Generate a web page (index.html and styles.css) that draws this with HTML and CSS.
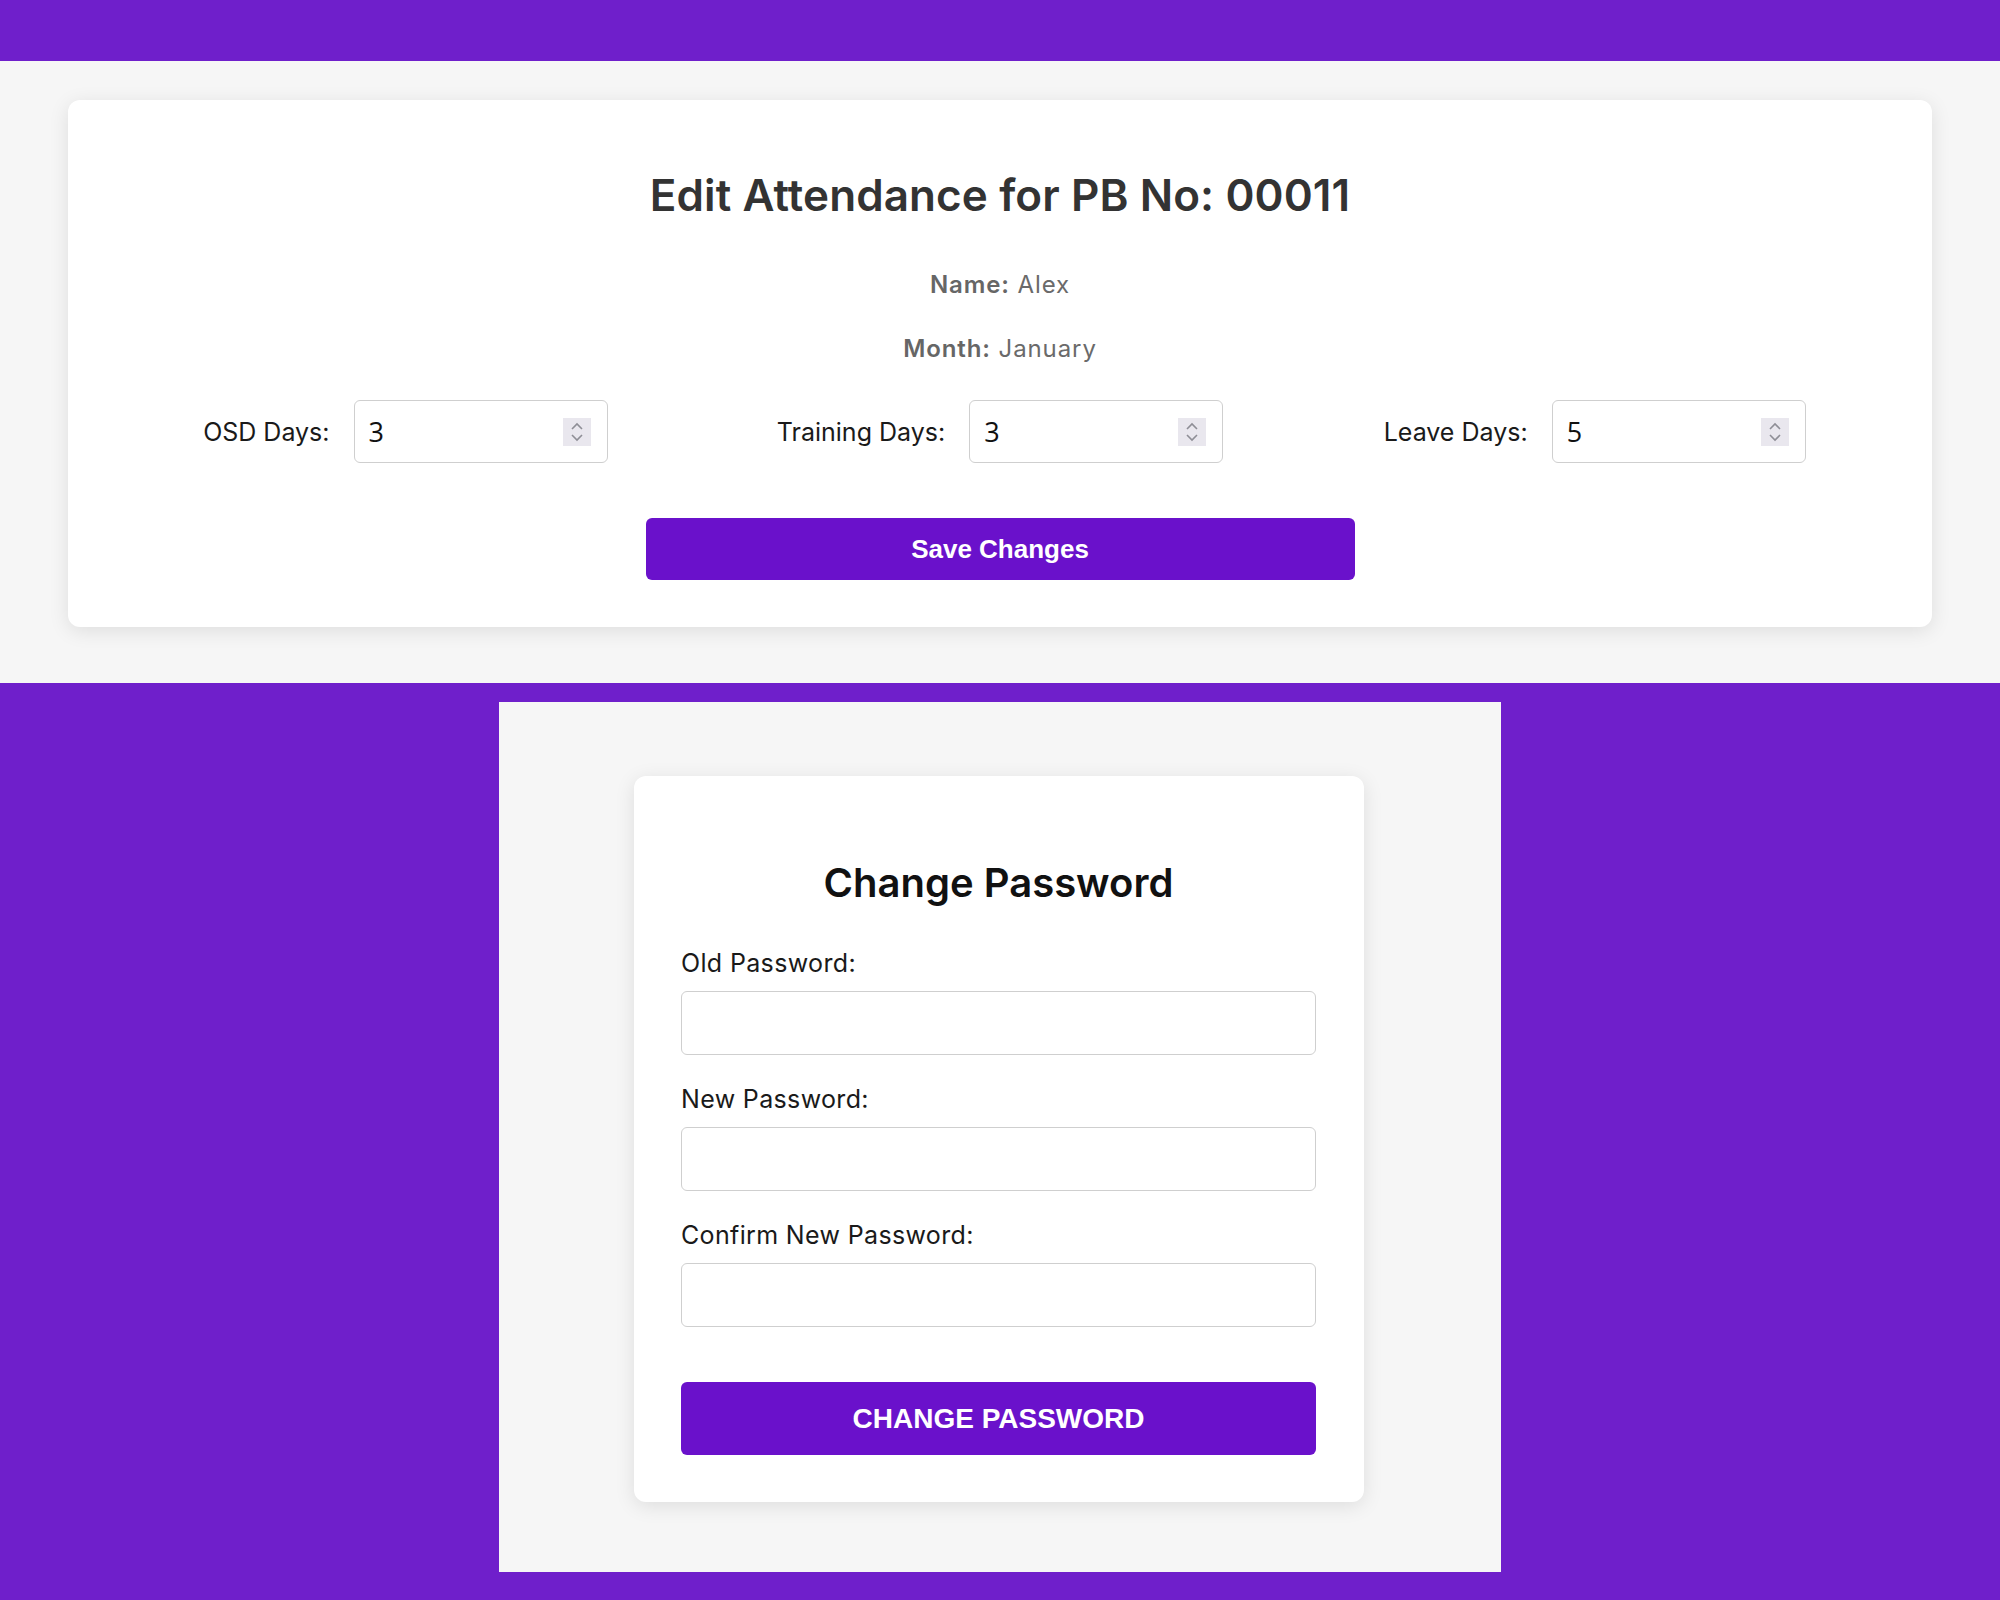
FILE: index.html
```html
<!DOCTYPE html>
<html lang="en">
<head>
<meta charset="utf-8">
<title>Edit Attendance</title>
<link rel="stylesheet" href="styles.css">
</head>
<body>
<header class="topbar"></header>

<section class="attendance-section">
  <div class="card attendance-card">
    <h1 class="attendance-title">Edit Attendance for PB No: 00011</h1>
    <p class="meta meta-name"><strong>Name:</strong> Alex</p>
    <p class="meta meta-month"><strong>Month:</strong> January</p>
    <form class="days-form">
      <div class="days-row">
        <div class="field">
          <label class="field-label" for="osd">OSD Days:</label>
          <div class="num-input">
            <input id="osd" class="num-value" type="text" value="3">
            <span class="spin"><svg width="28" height="28" viewBox="0 0 28 28"><path d="M9 11 L14 6 L19 11" fill="none" stroke="#8e8e96" stroke-width="1.6"/><path d="M9 17 L14 22 L19 17" fill="none" stroke="#8e8e96" stroke-width="1.6"/></svg></span>
          </div>
        </div>
        <div class="field">
          <label class="field-label" for="training">Training Days:</label>
          <div class="num-input">
            <input id="training" class="num-value" type="text" value="3">
            <span class="spin"><svg width="28" height="28" viewBox="0 0 28 28"><path d="M9 11 L14 6 L19 11" fill="none" stroke="#8e8e96" stroke-width="1.6"/><path d="M9 17 L14 22 L19 17" fill="none" stroke="#8e8e96" stroke-width="1.6"/></svg></span>
          </div>
        </div>
        <div class="field">
          <label class="field-label" for="leave">Leave Days:</label>
          <div class="num-input">
            <input id="leave" class="num-value" type="text" value="5">
            <span class="spin"><svg width="28" height="28" viewBox="0 0 28 28"><path d="M9 11 L14 6 L19 11" fill="none" stroke="#8e8e96" stroke-width="1.6"/><path d="M9 17 L14 22 L19 17" fill="none" stroke="#8e8e96" stroke-width="1.6"/></svg></span>
          </div>
        </div>
      </div>
      <button class="btn save-btn" type="button">Save Changes</button>
    </form>
  </div>
</section>

<section class="password-section">
  <div class="password-wrap">
    <div class="card password-card">
      <h2 class="password-title">Change Password</h2>
      <form class="password-form">
        <div class="pw-group">
          <label class="pw-label" for="old">Old Password:</label>
          <input id="old" class="pw-input" type="password">
        </div>
        <div class="pw-group">
          <label class="pw-label" for="new">New Password:</label>
          <input id="new" class="pw-input" type="password">
        </div>
        <div class="pw-group">
          <label class="pw-label" for="confirm">Confirm New Password:</label>
          <input id="confirm" class="pw-input" type="password">
        </div>
        <button class="btn pw-btn" type="button">CHANGE PASSWORD</button>
      </form>
    </div>
  </div>
</section>
</body>
</html>
```

FILE: styles.css
```css
* {
  box-sizing: border-box;
}

html, body {
  margin: 0;
  padding: 0;
}

body {
  background: #6f1fcb;
  font-family: "Inter", "Noto Sans", sans-serif;
  color: #222;
}

.topbar {
  height: 61px;
  background: #6f1fcb;
}

.attendance-section {
  background: #f6f6f6;
  padding: 39px 68px 56px;
}

.card {
  background: #ffffff;
  border-radius: 12px;
  box-shadow: 0 4px 20px rgba(0, 0, 0, 0.1);
}

.attendance-card {
  padding: 69px 40px 47px;
  text-align: center;
}

.attendance-title {
  margin: 0;
  font-size: 44px;
  line-height: 53px;
  font-weight: 600;
  color: #333;
  letter-spacing: 0.1px;
}

.meta {
  margin: 0;
  font-size: 24px;
  line-height: 36px;
  color: #6a6a6a;
  letter-spacing: 0.9px;
}

.meta strong {
  font-weight: 600;
  color: #666;
}

.meta-name {
  margin-top: 45px;
}

.meta-month {
  margin-top: 28px;
}

.days-form {
  margin: 33px 0 0;
}

.days-row {
  display: grid;
  grid-template-columns: repeat(3, 1fr);
}

.field {
  display: flex;
  justify-content: center;
  align-items: center;
  gap: 24px;
}

.field-label {
  font-size: 25px;
  color: #1a1a1a;
}

.num-input {
  width: 254px;
  height: 63px;
  border: 1px solid #cfcfcf;
  border-radius: 6px;
  display: flex;
  align-items: center;
  padding: 0 16px 0 14px;
  background: #fff;
}

.num-value {
  flex: 1;
  min-width: 0;
  border: none;
  outline: none;
  padding: 0;
  background: transparent;
  font-family: "Open Sans", "Noto Sans", sans-serif;
  font-size: 27px;
  color: #111;
}

.spin {
  width: 28px;
  height: 28px;
  background: #e9e7ee;
  display: block;
}

.spin svg {
  display: block;
}

.btn {
  display: block;
  border: none;
  border-radius: 6px;
  background: #6a11cb;
  color: #ffffff;
  font-family: "Liberation Sans", Arial, sans-serif;
  font-weight: 700;
  cursor: pointer;
}

.save-btn {
  width: 709px;
  height: 62px;
  margin: 55px auto 0;
  font-size: 26px;
}

.password-section {
  padding-top: 19px;
  padding-bottom: 28px;
}

.password-wrap {
  width: 1002px;
  height: 870px;
  margin: 0 auto;
  background: #f6f6f6;
  padding: 74px 2px 0 0;
}

.password-card {
  width: 730px;
  margin: 0 auto;
  padding: 83px 48px 47px 47px;
}

.password-title {
  margin: 0;
  text-align: center;
  font-size: 40px;
  line-height: 48px;
  font-weight: 600;
  color: #111;
}

.password-form {
  margin-top: 38px;
  display: flex;
  flex-direction: column;
}

.pw-group {
  display: flex;
  flex-direction: column;
  margin-bottom: 26px;
}

.pw-group:last-of-type {
  margin-bottom: 0;
}

.pw-label {
  font-size: 25px;
  line-height: 36px;
  color: #1a1a1a;
  margin-bottom: 10px;
  letter-spacing: 0.35px;
}

.pw-input {
  width: 100%;
  height: 64px;
  border: 1px solid #cfcfcf;
  border-radius: 6px;
  padding: 0 15px;
  font-size: 24px;
  background: #fff;
  outline: none;
}

.pw-btn {
  width: 100%;
  height: 73px;
  margin-top: 55px;
  font-size: 28px;
}
```
